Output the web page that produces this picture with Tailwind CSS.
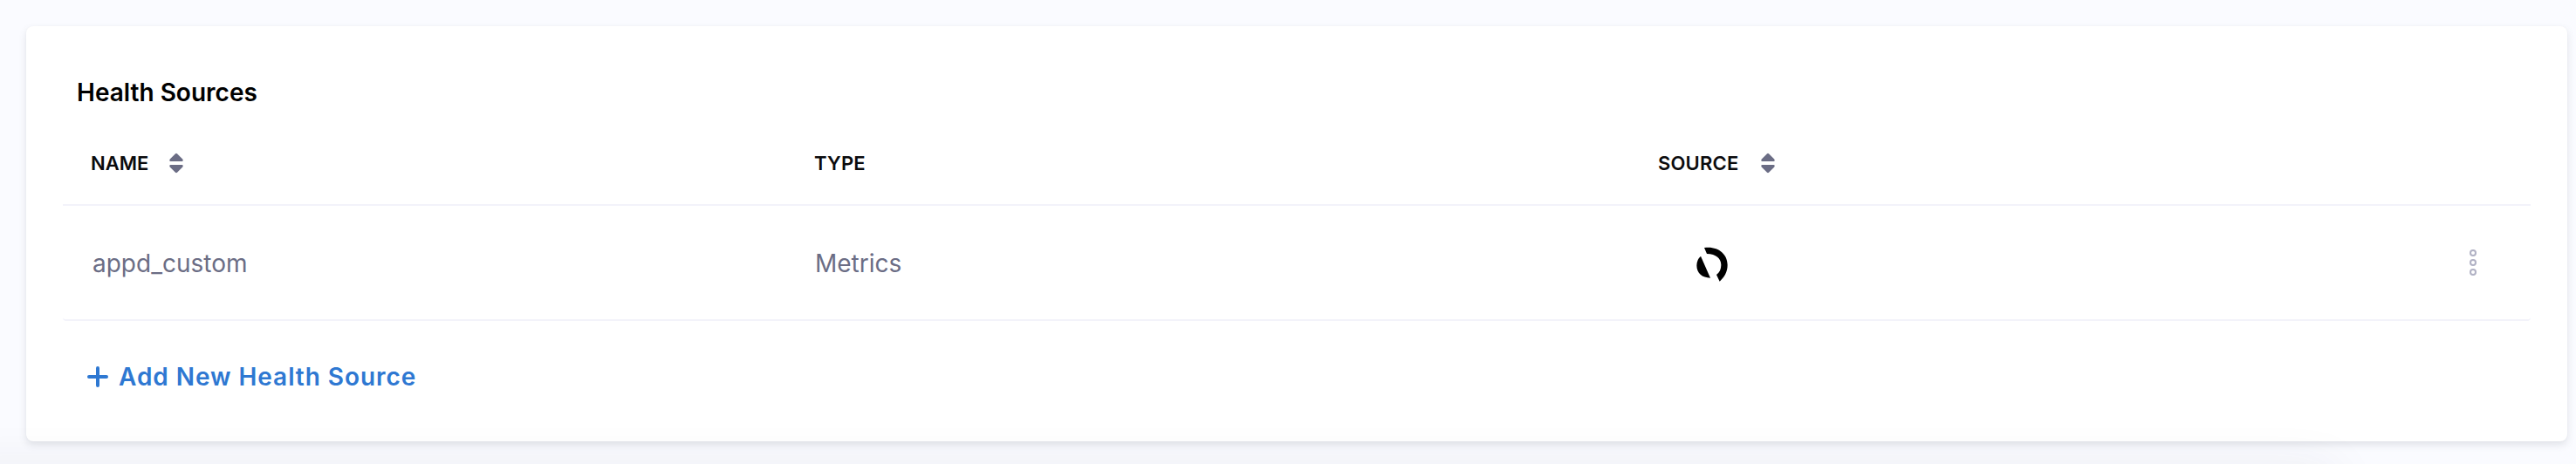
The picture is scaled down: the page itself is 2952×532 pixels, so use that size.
<!DOCTYPE html>
<html lang="en">
<head>
<meta charset="utf-8">
<title>Health Sources</title>
<script src="https://cdn.jsdelivr.net/npm/@tailwindcss/browser@4"></script>
</head>
<body class="bg-[#fafbff]">
<main class="relative h-[532px] w-[2952px] overflow-hidden bg-[#fafbff] pt-[30px] pl-[30px] font-['Inter',sans-serif]">
  <section class="flex h-[476px] w-[2912px] flex-col rounded-[8px] bg-white px-[42px] shadow-[0_4px_8px_rgba(96,97,112,0.16),0_0_2px_rgba(40,41,61,0.04)]">
    <h2 class="mt-[56px] ml-4 h-10 text-[28px] leading-10 font-semibold whitespace-nowrap text-black">Health Sources</h2>
    <div class="mt-[30px] flex h-[80px] items-start border-b-2 border-[#f3f3fa] text-[22px] leading-[62px] font-semibold text-[#0b0b0d]">
      <div class="flex h-[62px] w-[830px] items-center gap-[24px] pl-[32px]">
        <span>NAME</span>
        <svg class="h-6 w-4" viewBox="0 0 16 24" fill="#6b6d85"><path d="M7 1.3Q8 .4 9 1.3L15.3 7.6Q16.4 10 14.5 10H1.5Q-.4 10 .7 7.6ZM7 22.7Q8 23.6 9 22.7L15.3 16.4Q16.4 14 14.5 14H1.5Q-.4 14 .7 16.4Z"/></svg>
      </div>
      <div class="w-[967px] pl-[31px] tracking-[0.2px]">TYPE</div>
      <div class="flex h-[62px] items-center gap-[25px] pl-[31px]">
        <span class="tracking-[0.2px]">SOURCE</span>
        <svg class="h-6 w-4" viewBox="0 0 16 24" fill="#6b6d85"><path d="M7 1.3Q8 .4 9 1.3L15.3 7.6Q16.4 10 14.5 10H1.5Q-.4 10 .7 7.6ZM7 22.7Q8 23.6 9 22.7L15.3 16.4Q16.4 14 14.5 14H1.5Q-.4 14 .7 16.4Z"/></svg>
      </div>
    </div>
    <div class="flex h-[132px] items-center rounded-[4px] border-b-2 border-[#f3f3fa] text-[28px] leading-10 text-[#6b6d85]">
      <div class="w-[830px] pt-px pl-[34px]">appd_custom</div>
      <div class="w-[967px] pt-px pl-[32px]">Metrics</div>
      <div class="flex flex-1 pl-[61px]">
        <svg class="h-[60px] w-[60px]" viewBox="0 0 180 180" fill="#000"><path d="M57 68Q43 80 43 100C43 127 62 143 90 143ZM69 39C115 32 149 60 149 98C149 122 138 140 122 155L111 132C122 124 127 112 127 98C127 76 110 61 78 60Z"/></svg>
      </div>
      <svg class="mr-[62px] h-[30px] w-2" viewBox="0 0 8 30" fill="none" stroke="#b0b1c4" stroke-width="2"><circle cx="4" cy="4" r="3"/><circle cx="4" cy="15" r="3"/><circle cx="4" cy="26" r="3"/></svg>
    </div>
    <div class="mt-[44px] flex h-10 items-center gap-3 pl-[28px] text-[28px] leading-10 font-semibold tracking-[0.95px] text-[#2e78d2]">
      <svg class="h-6 w-6" viewBox="0 0 24 24" fill="none" stroke="#2e78d2" stroke-width="4" stroke-linecap="round"><path d="M12 2V22M2 12H22"/></svg>
      <span>Add New Health Source</span>
    </div>
  </section>
  <div class="pointer-events-none absolute inset-0 overflow-hidden">
    <div class="-ml-16 mt-[540px] h-10 w-[2740px] shadow-[0_0_60px_rgba(40,41,61,0.09)]"></div>
  </div>
</main>
</body>
</html>
